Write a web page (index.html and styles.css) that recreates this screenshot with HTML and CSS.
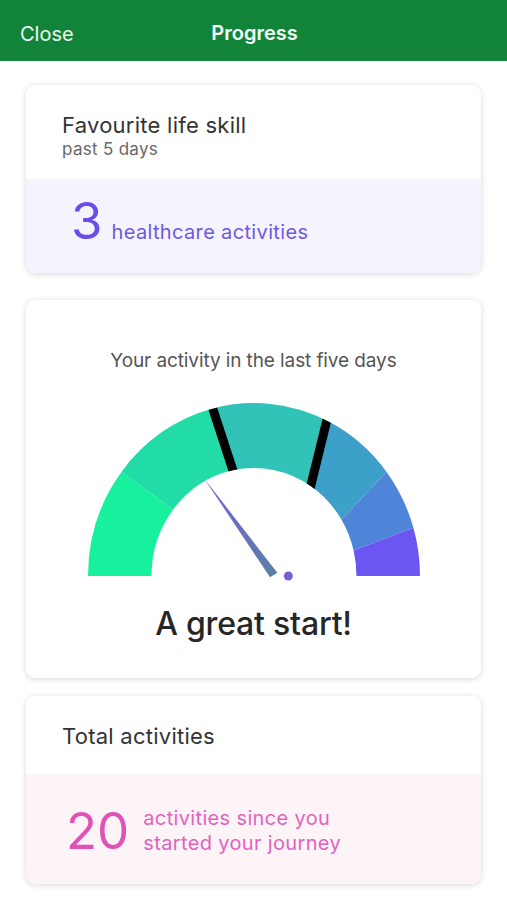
FILE: index.html
```html
<!DOCTYPE html>
<html>
<head>
  <title>Progress</title>
  <link rel="stylesheet" href="styles.css">
</head>
<body>
  <header class="topbar">
    <span class="close-btn">Close</span>
    <h1 class="topbar-title">Progress</h1>
  </header>

  <main class="content">
    <section class="card">
      <div class="card-head">
        <div class="card-title">Favourite life skill</div>
        <div class="card-sub">past 5 days</div>
      </div>
      <div class="card-stat stat-purple">
        <span class="stat-num">3</span>
        <span class="stat-text">healthcare activities</span>
      </div>
    </section>

    <section class="card gauge-card">
      <div class="gauge-label">Your activity in the last five days</div>
      <svg class="gauge" width="340" height="184" viewBox="0 0 340 184">
        <defs>
          <clipPath id="ring">
            <path d="M4 176 A166 173 0 0 1 336 176 L272.5 176 A102.5 108 0 0 0 67.5 176 Z"/>
          </clipPath>
          <linearGradient id="needleGrad" x1="120" y1="78" x2="190" y2="176" gradientUnits="userSpaceOnUse">
            <stop offset="0" stop-color="#7b5edb"/>
            <stop offset="1" stop-color="#5a80a4"/>
          </linearGradient>
        </defs>
        <path fill="#17f19d" d="M4 176 A166 173 0 0 1 37.43 71.89 L89.23 109.5 A102.5 108 0 0 0 67.5 176 Z"/>
        <path fill="#22dca8" d="M37.43 71.89 A166 173 0 0 1 128.72 8.43 L148.86 70.32 A102.5 108 0 0 0 89.23 109.5 Z"/>
        <path fill="#31c2b8" d="M128.72 8.43 A166 173 0 0 1 242.77 20.51 L226.72 86.05 A102.5 108 0 0 0 148.86 70.32 Z"/>
        <path fill="#3da0c9" d="M242.77 20.51 A166 173 0 0 1 302.57 71.89 L257.39 119.57 A102.5 108 0 0 0 226.72 86.05 Z"/>
        <path fill="#4f85d9" d="M302.57 71.89 A166 173 0 0 1 329.41 127.73 L269.59 150.43 A102.5 108 0 0 0 257.39 119.57 Z"/>
        <path fill="#6b55f3" d="M329.41 127.73 A166 173 0 0 1 336 176 L272.5 176 A102.5 108 0 0 0 269.59 150.43 Z"/>
        <g clip-path="url(#ring)" stroke="#000" stroke-width="9">
          <line x1="127.7" y1="5.3" x2="149.9" y2="73.4"/>
          <line x1="243.6" y1="17.2" x2="225.9" y2="89.3"/>
        </g>
        <polygon fill="url(#needleGrad)" points="120,78.3 193.3,172.7 186,177.3"/>
        <circle cx="204.3" cy="176" r="4.5" fill="#7a5ed8"/>
      </svg>
      <div class="gauge-result">A great start!</div>
    </section>

    <section class="card">
      <div class="card-head total-head">
        <div class="card-title">Total activities</div>
      </div>
      <div class="card-stat stat-pink">
        <span class="stat-num">20</span>
        <span class="stat-text">activities since you<br>started your journey</span>
      </div>
    </section>
  </main>
</body>
</html>
```

FILE: styles.css
```css
body {
  margin: 0;
  background-color: #fff;
  font-family: Inter, "Noto Sans", sans-serif;
  color: #333;
}

.topbar {
  position: relative;
  height: 61px;
  background-color: #12843a;
  display: flex;
  align-items: center;
  justify-content: center;
}

.close-btn {
  position: absolute;
  left: 20px;
  top: 21px;
  font-size: 20px;
  line-height: 26px;
  color: #eef6ef;
}

.topbar-title {
  margin: 5px 0 0 2px;
  font-size: 20px;
  font-weight: 600;
  color: #f4faf5;
}

.content {
  padding: 24px 26px;
  display: flex;
  flex-direction: column;
}

.card {
  background-color: #fff;
  border-radius: 9px;
  box-shadow: 0 1px 6px rgba(0, 0, 0, 0.16);
  overflow: hidden;
}

.card-head {
  padding: 27px 36px 19px;
}

.card-title {
  font-size: 22px;
  line-height: 26px;
  letter-spacing: 0.25px;
  color: #333;
}

.card-sub {
  font-size: 17px;
  line-height: 22px;
  letter-spacing: 0.3px;
  color: #666;
}

.card-stat {
  display: flex;
  align-items: baseline;
  gap: 9px;
  padding: 0 36px;
}

.stat-num {
  font-size: 51px;
  line-height: 60px;
}

.stat-text {
  font-size: 20px;
  letter-spacing: 0.35px;
}

.stat-purple {
  background-color: #f5f4fe;
  height: 94px;
  padding-left: 45px;
  padding-top: 12px;
  box-sizing: border-box;
}

.stat-purple .stat-num {
  color: #6a4de8;
}

.stat-purple .stat-text {
  color: #7059e0;
}

.gauge-card {
  margin: 27px 0 18px;
  padding: 49px 0 34px;
  display: flex;
  flex-direction: column;
  align-items: center;
}

.gauge-label {
  font-size: 19px;
  line-height: 24px;
  letter-spacing: -0.1px;
  color: #555;
}

.gauge {
  display: block;
  margin-top: 27px;
}

.gauge-result {
  margin-top: 20px;
  font-size: 32px;
  line-height: 40px;
  font-weight: 500;
  letter-spacing: -0.2px;
  color: #262626;
}

.total-head {
  padding: 27px 36px 25px;
}

.stat-pink {
  background-color: #fdf4f8;
  height: 110px;
  align-items: center;
  gap: 14px;
  padding-left: 40px;
  padding-top: 4px;
  box-sizing: border-box;
}

.stat-pink .stat-num {
  color: #e052b6;
}

.stat-pink .stat-text {
  color: #e063c0;
  line-height: 25px;
}
```
